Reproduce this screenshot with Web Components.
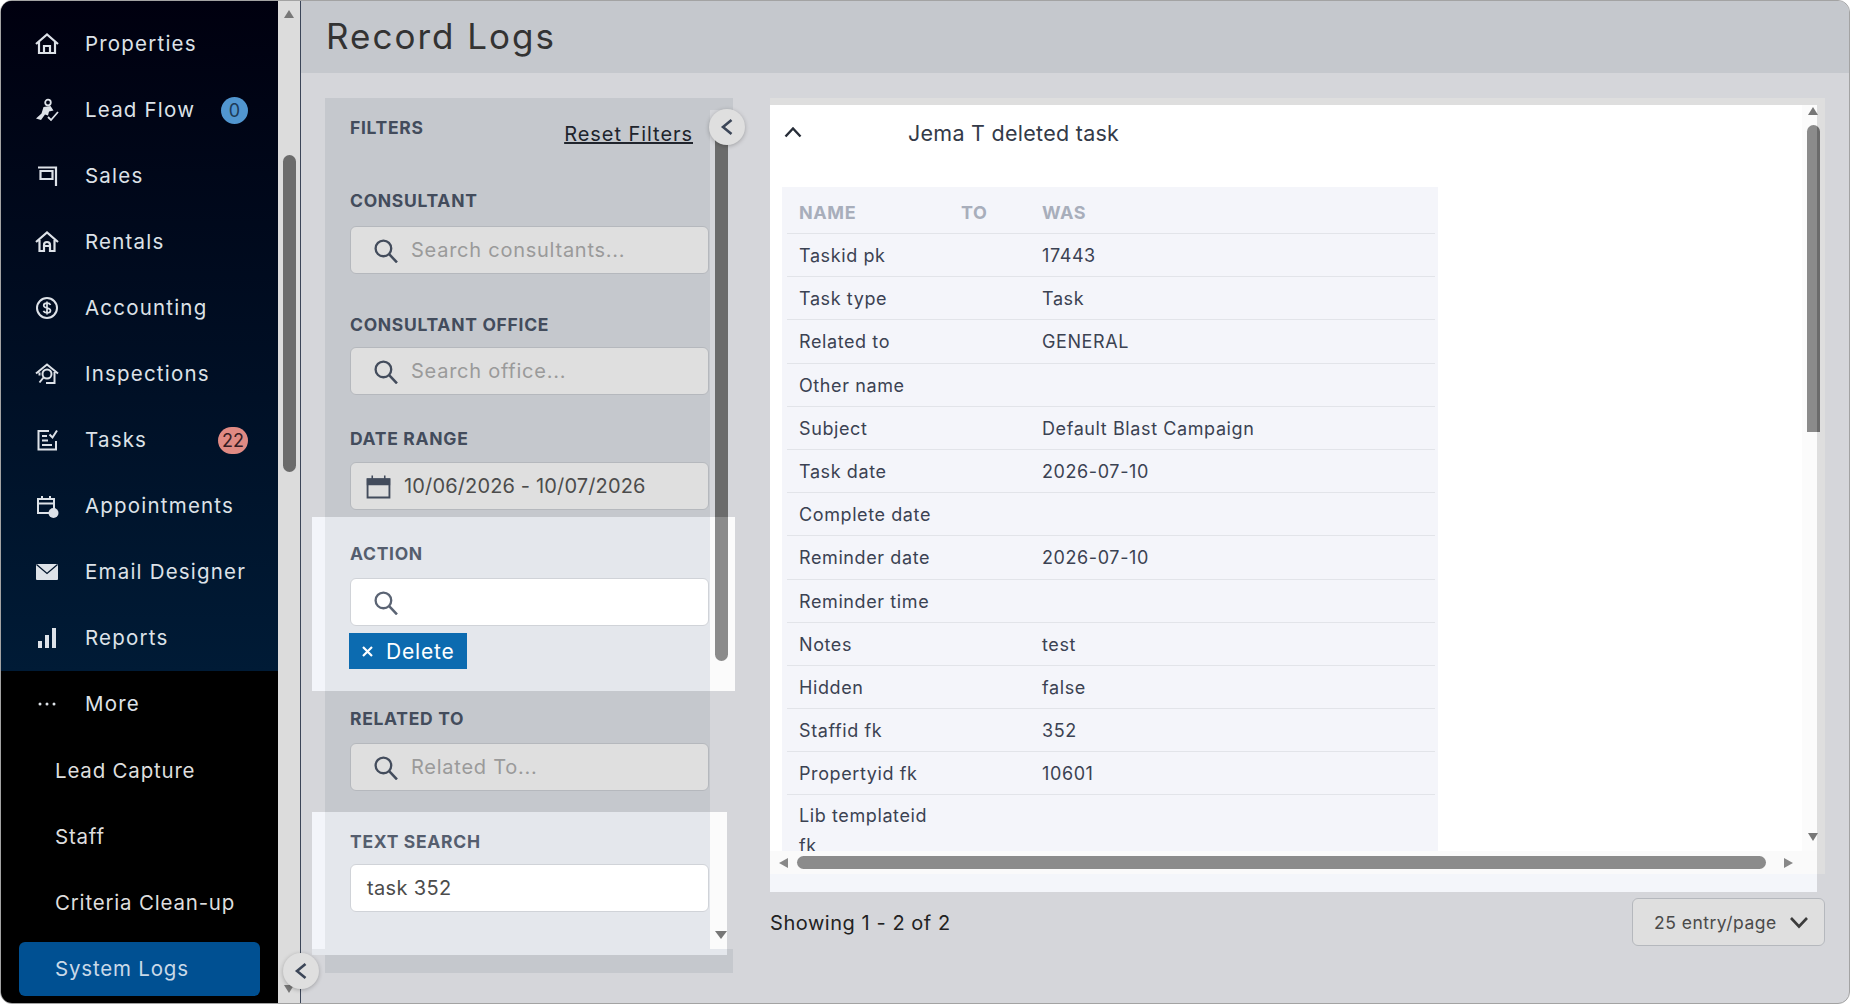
<!DOCTYPE html>
<html>
<head>
<meta charset="utf-8">
<title>Record Logs</title>
<style>
  html, body { margin: 0; height: 100%; background: #fff; overflow: hidden; }
  body { font-family: Inter, "Liberation Sans", sans-serif; }
</style>
</head>
<body>
<logs-app></logs-app>

<script>
const ICONS = {
  home: '<path d="M1 12 12 2.5 23 12M4 10v11h16V10M9 21v-7h6v7" fill="none" stroke="currentColor" stroke-width="2.200"/>',
  lead: '<circle cx="13" cy="4.500" r="2.800" fill="none" stroke="currentColor" stroke-width="1.800"/><path d="M8.500 9l7-1 3 4.500-4.500 1-1 4-3-1-4 5.500-5-1.500 5.500-5z" fill="currentColor"/><path d="M13 19l3 3 7-8" fill="none" stroke="currentColor" stroke-width="1.800"/>',
  sales: '<path d="M3 3.500h19M21 2.500V22M5.500 7H17.500V15H5.500Z" fill="none" stroke="currentColor" stroke-width="2.200"/>',
  rentals: '<path d="M1 12 12 2.500 23 12M4.500 10v11h4.500v-6a3 3 0 0 1 6 0v6h4.500V10M9 16h6" fill="none" stroke="currentColor" stroke-width="2.200"/>',
  money: '<circle cx="12" cy="12" r="10" fill="none" stroke="currentColor" stroke-width="2"/><path d="M15.500 9c-.5-1.300-2-1.800-3.500-1.800-2 0-3.300 1-3.300 2.400 0 3.300 6.800 1.500 6.800 4.800 0 1.400-1.400 2.400-3.500 2.400-1.600 0-3.100-.6-3.600-1.900M12 5.500v13" fill="none" stroke="currentColor" stroke-width="1.700"/>',
  inspect: '<path d="M1 11.500 12 2.500 23 11.500M4.500 10.500v3M19.500 10v11H11" fill="none" stroke="currentColor" stroke-width="2"/><circle cx="12" cy="12" r="4.500" fill="none" stroke="currentColor" stroke-width="2"/><path d="M8.500 15.500 4.500 20.500" stroke="currentColor" stroke-width="2"/>',
  tasks: '<path d="M14 3H3.500v18.500H21V13" fill="none" stroke="currentColor" stroke-width="2"/><path d="M7 8h5M7 12.500h6M7 17h10" stroke="currentColor" stroke-width="2"/><path d="M14.500 6.500l3 3 4.500-7" fill="none" stroke="currentColor" stroke-width="2"/>',
  appt: '<path d="M3 5h16v14H3zM3 9.500h16M7 2v4M15 2v4" fill="none" stroke="currentColor" stroke-width="2"/><circle cx="18.500" cy="19" r="5" fill="currentColor"/>',
  mail: '<rect x="1" y="4" width="22" height="16" rx="1" fill="currentColor"/><path d="M1.500 4.500 12 13.500 22.500 4.500" fill="none" stroke="#00152b" stroke-width="1.300"/>',
  bars: '<rect x="3" y="15" width="4" height="7" fill="currentColor"/><rect x="10" y="9" width="4" height="13" fill="currentColor"/><rect x="17" y="2" width="4" height="20" fill="currentColor"/>',
  more: '<circle cx="5" cy="12" r="1.500" fill="currentColor"/><circle cx="12" cy="12" r="1.500" fill="currentColor"/><circle cx="19" cy="12" r="1.500" fill="currentColor"/>',
  search: '<circle cx="10" cy="10" r="7.500" fill="none" stroke="currentColor" stroke-width="2.200"/><path d="M15.500 15.500 23 23.500" stroke="currentColor" stroke-width="2.400"/>',
  calendar: '<path d="M1.500 5h21v17.500h-21zM1.500 9.500h21" fill="none" stroke="currentColor" stroke-width="1.800"/><path d="M1.500 5h21v5h-21zM6 1.500v4M18 1.500v4" fill="currentColor" stroke="currentColor" stroke-width="1.500"/>'
};

function svg(name, size) {
  return `<svg viewBox="0 0 24 24" width="${size}" height="${size}" aria-hidden="true">${ICONS[name]}</svg>`;
}

class NavItem extends HTMLElement {
  connectedCallback() {
    const icon = this.getAttribute('icon');
    const badge = this.getAttribute('badge');
    const tone = this.getAttribute('tone') || 'blue';
    this.attachShadow({ mode: 'open' }).innerHTML = `
    <style>
      :host { display: flex; align-items: center; height: 66px; padding-left: 34px; padding-right: 30px; box-sizing: border-box;
        color: #dde2e8; font-size: 20.500px; letter-spacing: 1.200px; }
      :host([sub]) { padding-left: 54px; color: #dedede; letter-spacing: .800px; }
      :host([active]) { height: 54px; margin: 6px 18px 6px 18px; padding-left: 36px; padding-right: 0; background: #005092; border-radius: 6px; color: #c9d9e8; }
      .ico { width: 24px; height: 24px; margin-right: 26px; display: flex; }
      .txt { flex: 1; white-space: nowrap; margin-top: -2px; }
      .badge { height: 27px; min-width: 27px; padding: 0 4px; box-sizing: border-box; border-radius: 14px; display: flex; align-items: center; justify-content: center;
        font-size: 18px; letter-spacing: 0; }
      .blue { background: #5196d0; color: #1d3a58; padding: 0; }
      .red { background: #e08a83; color: #351c24; }
    </style>
    ${icon ? `<span class="ico">${svg(icon, 24)}</span>` : ''}
    <span class="txt"><slot></slot></span>
    ${badge ? `<span class="badge ${tone}">${badge}</span>` : ''}`;
  }
}
customElements.define('nav-item', NavItem);

class SideBar extends HTMLElement {
  constructor() {
    super();
    this.attachShadow({ mode: 'open' }).innerHTML = `
    <style>
      :host { display: block; background: #000; height: 100%; overflow: hidden; }
      .top { background: linear-gradient(#00000f, #001b36); }
    </style>
    <div class="top">
      <nav-item icon="home" style="height:76px;padding-top:10px">Properties</nav-item>
      <nav-item icon="lead" badge="0">Lead Flow</nav-item>
      <nav-item icon="sales">Sales</nav-item>
      <nav-item icon="rentals">Rentals</nav-item>
      <nav-item icon="money">Accounting</nav-item>
      <nav-item icon="inspect">Inspections</nav-item>
      <nav-item icon="tasks" badge="22" tone="red">Tasks</nav-item>
      <nav-item icon="appt">Appointments</nav-item>
      <nav-item icon="mail">Email Designer</nav-item>
      <nav-item icon="bars">Reports</nav-item>
    </div>
    <nav-item icon="more">More</nav-item>
    <nav-item sub style="margin-top:1px">Lead Capture</nav-item>
    <nav-item sub>Staff</nav-item>
    <nav-item sub>Criteria Clean-up</nav-item>
    <nav-item sub active>System Logs</nav-item>`;
  }
}
customElements.define('side-bar', SideBar);

class RoundToggle extends HTMLElement {
  constructor() {
    super();
    this.attachShadow({ mode: 'open' }).innerHTML = `
    <style>
      :host { position: absolute; z-index: 5; width: 36px; height: 36px; border-radius: 50%; background: #dfdfdf;
        box-shadow: 0 1px 4px rgba(0,0,0,.25); display: flex; align-items: center; justify-content: center; }
      svg { display: block; }
    </style>
    <svg width="14" height="18" viewBox="0 0 14 18"><path d="M11.500 2 3 9l8.500 7" fill="none" stroke="#3c4658" stroke-width="2.600"/></svg>`;
  }
}
customElements.define('round-toggle', RoundToggle);

class FilterField extends HTMLElement {
  connectedCallback() {
    const icon = this.getAttribute('icon');
    const ph = this.getAttribute('placeholder') || '';
    const value = this.getAttribute('value') || '';
    const gap = this.getAttribute('gap') || '15';
    this.attachShadow({ mode: 'open' }).innerHTML = `
    <style>
      :host { display: block; position: relative; }
      :host([bright]) { margin: 0 -26px 0 -38px; padding: 0 26px 0 38px; z-index: 1;
        background: linear-gradient(to right, #f3f5fa 13px, #e4e7ec 13px, #e4e7ec 398px, #fbfbfb 398px); }
      label { display: block; height: 20px; line-height: 20px; font-size: 17.500px; font-weight: 700; color: #434c5c; letter-spacing: .700px; margin-bottom: ${gap}px; white-space: nowrap; }
      :host([bright]) label { color: #555e6e; }
      .box { height: 48px; box-sizing: border-box; border: 1px solid #b5b8bd; border-radius: 6px; background: #dfdfdf; display: flex; align-items: center;
        padding-left: 22px; font-size: 20px; letter-spacing: .750px; color: #9a9a9a; white-space: nowrap; }
      :host([bright]) .box { background: #fff; border-color: #d0d3d8; }
      .box svg { color: #434c5c; margin-right: 13px; flex: none; }
      :host([bright]) .box svg { color: #5b6474; }
      .val { color: #4c4c4c; letter-spacing: .350px; }
      :host([date]) .box { padding-left: 15px; }
      :host([date]) .val { letter-spacing: .150px; }
      :host([plain]) .box { padding-left: 16px; }
    </style>
    <label>${this.getAttribute('label')}</label>
    <div class="box">${icon ? svg(icon, 25) : ''}${value ? `<span class="val">${value}</span>` : `<span>${ph}</span>`}</div>
    <slot></slot>`;
  }
}
customElements.define('filter-field', FilterField);

class ChipTag extends HTMLElement {
  constructor() {
    super();
    this.attachShadow({ mode: 'open' }).innerHTML = `
    <style>
      :host { display: inline-flex; align-items: center; height: 36px; background: #0c6bb0; color: #fff; padding: 0 13px 0 12px; font-size: 21px; letter-spacing: .800px; }
      svg { margin-right: 12px; }
    </style>
    <svg width="13" height="13" viewBox="0 0 13 13"><path d="M2 2l9 9M11 2l-9 9" stroke="#fff" stroke-width="2.200"/></svg><slot></slot>`;
  }
}
customElements.define('chip-tag', ChipTag);

class FilterPanel extends HTMLElement {
  constructor() {
    super();
    this.attachShadow({ mode: 'open' }).innerHTML = `
    <style>
      :host { display: block; position: relative; width: 408px; height: 875px; flex: none; box-sizing: border-box; padding: 20px 24px 0 25px; background: #c5c8cd; }
      .head { display: flex; justify-content: space-between; width: 343px; height: 43px; }
      .t { font-size: 17.500px; font-weight: 700; color: #434c5c; line-height: 20px; letter-spacing: .700px; }
      .reset { font-size: 20px; color: #20242c; text-decoration: underline; letter-spacing: .950px; line-height: 28px; margin-top: 2px; white-space: nowrap; }
      .track { position: absolute; left: 385px; top: 12px; width: 23px; height: 839px; background: #d5d6da; }
      .thumb { position: absolute; left: 390px; top: 32px; width: 13px; height: 531px; border-radius: 0 0 7px 7px; z-index: 2;
        background: linear-gradient(#6b6b6b 387px, #8b8b8b 387px); }
      .arrow { position: absolute; left: 390px; top: 833px; z-index: 2; width: 0; height: 0; border: 6px solid transparent; border-top: 8px solid #777; border-bottom: 0; }
      round-toggle { left: 384px; top: 11px; }
    </style>
    <div class="track"></div>
    <div class="thumb"></div>
    <div class="arrow"></div>
    <div class="head"><span class="t">FILTERS</span><span class="reset">Reset Filters</span></div>
    <filter-field label="CONSULTANT" icon="search" placeholder="Search consultants..." style="margin-top:30px"></filter-field>
    <filter-field label="CONSULTANT OFFICE" icon="search" placeholder="Search office..." gap="12" style="margin-top:41px"></filter-field>
    <filter-field label="DATE RANGE" icon="calendar" value="10/06/2026 - 10/07/2026" gap="13" date style="margin-top:34px"></filter-field>
    <filter-field label="ACTION" icon="search" gap="14" bright style="margin-top:7px;padding-top:27px;height:147px">
      <chip-tag style="margin-top:7px;margin-left:-1px">Delete</chip-tag>
    </filter-field>
    <filter-field label="RELATED TO" icon="search" placeholder="Related To..." gap="14" style="margin-top:18px"></filter-field>
    <filter-field label="TEXT SEARCH" value="task 352" gap="12" bright plain style="margin-top:21px;padding-top:20px;height:123px;margin-right:-18px;padding-right:18px;background:linear-gradient(to bottom, transparent 137px, #e4e7ec 137px),linear-gradient(to right, #f3f5fa 13px, #e4e7ec 13px, #e4e7ec 398px, #fbfbfb 398px)"></filter-field>
    <round-toggle></round-toggle>`;
  }
}
customElements.define('filter-panel', FilterPanel);

class LogRow extends HTMLElement {
  connectedCallback() {
    this.attachShadow({ mode: 'open' }).innerHTML = `
    <style>
      :host { display: grid; grid-template-columns: 162px 81px 1fr; align-items: center; box-sizing: border-box; min-height: 43.200px; padding-top: 2px; border-bottom: 1px solid #e2e4e9; margin: 0 3px 0 5px;
        font-size: 18px; letter-spacing: .600px; color: #3b4252; line-height: 30px; }
      :host([head]) { min-height: 47px; padding-top: 6px; font-weight: 700; color: #a8aebb; }
      :host([last]) { border: 0; align-items: start; padding-top: 6px; }
      span { padding-left: 12px; }
    </style>
    <span>${this.getAttribute('name')}</span><span>${this.getAttribute('to') || ''}</span><span>${this.getAttribute('was') || ''}</span>`;
  }
}
customElements.define('log-row', LogRow);

class LogPanel extends HTMLElement {
  constructor() {
    super();
    this.attachShadow({ mode: 'open' }).innerHTML = `
    <style>
      :host { display: block; position: relative; }
      .dim { height: 776px; padding-top: 7px; box-sizing: border-box; background: #dedede; }
      .inner { width: 1047px; height: 769px; background: #fff; position: relative; }
      .view { height: 746px; width: 1032px; background: #fff; overflow: hidden; box-sizing: border-box; padding: 0 0 0 12px; }
      .title { height: 82px; display: flex; align-items: flex-start; }
      .title svg { margin: 21px 0 0 2px; }
      .title span { margin: 12px 0 0 106px; font-size: 21.500px; letter-spacing: .270px; line-height: 32px; color: #333a48; }
      .table { width: 656px; height: 664px; background: #f4f5fa; overflow: hidden; }
      .vtrack { position: absolute; right: 0; top: 0; width: 15px; height: 746px; background: #fbfbfb; }
      .htrack { height: 23px; background: #fafafa; }
      .vthumb { position: absolute; left: 1037px; top: 20px; width: 13px; height: 307px; border-radius: 7px 7px 0 0; z-index: 2; background: linear-gradient(to right, #8b8b8b 10px, #6b6b6b 10px); }
      .hthumb { position: absolute; left: 27px; top: 751px; width: 969px; height: 13px; border-radius: 7px; background: #8b8b8b; }
      .tri { position: absolute; width: 0; height: 0; border: 0 solid transparent; }
      .up { left: 1038px; top: 2px; border-width: 0 5.500px 8px; border-bottom-color: #777; }
      .down { left: 1038px; top: 728px; border-width: 8px 5.500px 0; border-top-color: #777; }
      .left { left: 9px; top: 753px; border-width: 5px 9px 5px 0; border-right-color: #888; }
      .right { left: 1014px; top: 753px; border-width: 5px 0 5px 9px; border-left-color: #888; }
      .foot { width: 1047px; height: 18px; background: #f4f6fa; }
    </style>
    <div class="dim"><div class="inner">
      <div class="view">
        <div class="title">
          <svg width="18" height="12" viewBox="0 0 18 12"><path d="M1.500 10.500 9 2.500l7.500 8" fill="none" stroke="#272d38" stroke-width="2.400"/></svg>
          <span>Jema T deleted task</span>
        </div>
        <div class="table"><slot></slot></div>
      </div>
      <div class="vtrack"></div>
      <div class="htrack"></div>
      <div class="vthumb"></div>
      <div class="hthumb"></div>
      <div class="tri up"></div><div class="tri down"></div><div class="tri left"></div><div class="tri right"></div>
    </div></div>
    <div class="foot"></div>`;
  }
}
customElements.define('log-panel', LogPanel);

class PageSize extends HTMLElement {
  constructor() {
    super();
    this.attachShadow({ mode: 'open' }).innerHTML = `
    <style>
      :host { display: flex; align-items: center; justify-content: space-between; width: 193px; height: 48px; box-sizing: border-box; border: 1px solid #b5b8bd; border-radius: 6px;
        background: #dfdfdf; padding: 0 15px 0 21px; font-size: 17.500px; letter-spacing: .500px; color: #4a4a4a; white-space: nowrap; }
    </style>
    <span><slot></slot></span>
    <svg width="20" height="13" viewBox="0 0 20 13"><path d="M2 2l8 8.500L18 2" fill="none" stroke="#3c3c3c" stroke-width="2.600"/></svg>`;
  }
}
customElements.define('page-size', PageSize);

class LogsApp extends HTMLElement {
  constructor() {
    super();
    this.attachShadow({ mode: 'open' }).innerHTML = `
    <style>
      :host { display: grid; grid-template-columns: 277px 22px 1px 1fr; width: 1850px; height: 1004px; box-sizing: border-box; position: relative; overflow: hidden;
        border: 1px solid #a3a3a3; border-radius: 12px; background: #d5d6da; }
      .rail { background: #dcdcdc; position: relative; }
      .rail i { position: absolute; left: 5px; }
      .rail .th { top: 154px; width: 13px; height: 317px; background: #6b6b6b; border-radius: 7px; }
      .rail .u { top: 9px; left: 6px; width: 0; height: 0; border: 5.500px solid transparent; border-bottom: 8px solid #777; border-top: 0; }
      .rail .d { top: 984px; left: 6px; width: 0; height: 0; border: 5.500px solid transparent; border-top: 8px solid #777; border-bottom: 0; }
      .line { background: #3b4558; }
      main { display: flex; flex-direction: column; min-width: 0; }
      header { height: 72px; flex: none; box-sizing: border-box; padding: 0 0 2px 25px; background: #c5c8cd; display: flex; align-items: center; font-size: 35px; letter-spacing: 2px; color: #333; }
      .body { display: flex; gap: 37px; padding: 25px 0 0 24px; }
      .right { width: 1055px; }
      .foot { display: flex; justify-content: space-between; padding-top: 6px; width: 1055px; }
      .foot span { font-size: 20px; letter-spacing: .550px; color: #222; line-height: 50px; }
      round-toggle { left: 282px; top: 952px; }
    </style>
    <side-bar></side-bar>
    <div class="rail"><i class="u"></i><i class="th"></i><i class="d"></i></div>
    <div class="line"></div>
    <main>
      <header>Record Logs</header>
      <div class="body">
        <filter-panel></filter-panel>
        <div class="right">
          <log-panel>
            <log-row head name="NAME" to="TO" was="WAS"></log-row>
            <log-row name="Taskid pk" was="17443"></log-row>
            <log-row name="Task type" was="Task"></log-row>
            <log-row name="Related to" was="GENERAL"></log-row>
            <log-row name="Other name"></log-row>
            <log-row name="Subject" was="Default Blast Campaign"></log-row>
            <log-row name="Task date" was="2026-07-10"></log-row>
            <log-row name="Complete date"></log-row>
            <log-row name="Reminder date" was="2026-07-10"></log-row>
            <log-row name="Reminder time"></log-row>
            <log-row name="Notes" was="test"></log-row>
            <log-row name="Hidden" was="false"></log-row>
            <log-row name="Staffid fk" was="352"></log-row>
            <log-row name="Propertyid fk" was="10601"></log-row>
            <log-row last name="Lib templateid fk"></log-row>
          </log-panel>
          <div class="foot"><span>Showing 1 - 2 of 2</span><page-size>25 entry/page</page-size></div>
        </div>
      </div>
    </main>
    <round-toggle></round-toggle>`;
  }
}
customElements.define('logs-app', LogsApp);
</script>
</body>
</html>
